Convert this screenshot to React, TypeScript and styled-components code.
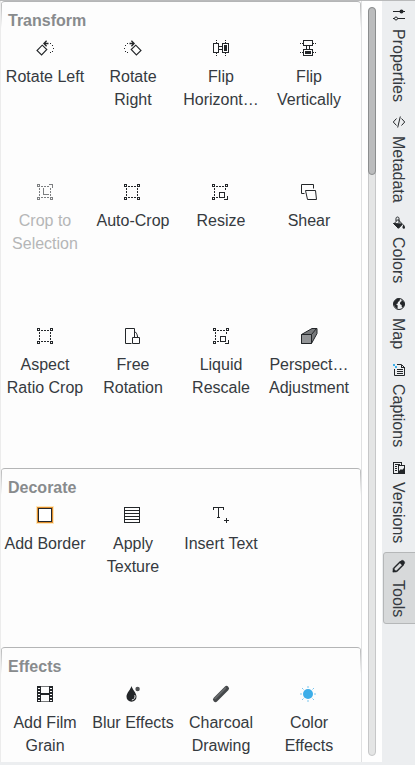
import React from "react";
import styled, { createGlobalStyle } from "styled-components";

const GlobalStyle = createGlobalStyle`
  * { box-sizing: border-box; }
  body { margin: 0; overflow: hidden; background: #eff0f1; }
`;

const Window = styled.div`
  display: flex;
  width: 415px;
  height: 765px;
  overflow: hidden;
  border-top: 1px solid #b9babb;
  background: #eceef0;
  color: #353a40;
  font: 16px/23px "Liberation Sans", Arial, sans-serif;
`;

const ToolArea = styled.main`
  flex: 0 0 362px;
  height: 761px;
  overflow: hidden;
  padding-left: 1px;
  background: #fdfdfd;
  border-right: 1px solid #e0e1e2;
  box-shadow: inset 1px 0 #ececec;
`;

const Group = styled.section<{ $height: number }>`
  height: ${(p) => p.$height}px;
  border-top: 1px solid #b4b5b6;
  border-radius: 4px 4px 0 0;
  background:
    linear-gradient(#b4b5b6, #fdfdfd00) left top / 1px 26px no-repeat,
    linear-gradient(#b4b5b6, #fdfdfd00) right top / 1px 26px no-repeat;
`;

const GroupTitle = styled.h2`
  margin: 0;
  padding: 7px 7px 0;
  height: 34px;
  font-size: 16px;
  line-height: 23px;
  font-weight: 700;
  color: #888b8d;
`;

const ToolGrid = styled.div`
  display: grid;
  grid-template-columns: repeat(4, 88px);
  grid-auto-rows: 144px;
`;

const Tool = styled.button<{ $muted?: boolean }>`
  display: flex;
  flex-direction: column;
  align-items: center;
  padding: 4px 0 0;
  border: 0;
  background: none;
  font: inherit;
  color: ${(p) => (p.$muted ? "#b5b6b7" : "inherit")};
`;

const ToolLabel = styled.span`
  margin-top: 9px;
  white-space: pre;
  text-align: center;
`;

const Glyph = styled.svg<{ $nudge?: boolean; $muted?: boolean }>`
  display: block;
  flex: none;
  width: 16px;
  height: 16px;
  overflow: visible;
  margin-right: ${(p) => (p.$nudge ? 2 : 0)}px;
  fill: none;
  stroke: ${(p) => (p.$muted ? "#7d7f81" : "#232629")};
  stroke-width: 1;
`;

const ScrollGutter = styled.div`
  flex: 0 0 20px;
  height: 761px;
  padding: 6px 6px 0;
  background: #fefefe;
`;

const ScrollTrack = styled.div`
  width: 8px;
  height: 749px;
  border: 1px solid #c6c7c8;
  border-radius: 4px;
  background: #e4e5e5;
`;

const ScrollThumb = styled.div`
  width: 8px;
  height: 168px;
  margin: -1px;
  border: 1px solid #8b8d8e;
  border-radius: 4px;
  background: #bbbcbd;
`;

const TabBar = styled.nav`
  display: flex;
  flex-direction: column;
  flex: 1;
  padding-left: 1px;
`;

const Tab = styled.button<{ $height: number; $active?: boolean }>`
  display: flex;
  flex-direction: column;
  align-items: flex-start;
  gap: 6px;
  width: 36px;
  height: ${(p) => p.$height}px;
  padding: 5px 0 0 7px;
  border: 1px solid ${(p) => (p.$active ? "#b5b7b8" : "transparent")};
  border-radius: 3px;
  background: ${(p) => (p.$active ? "#d7d9da" : "none")};
  color: inherit;
  font: inherit;
`;

const TabLabel = styled.span`
  writing-mode: vertical-rl;
  margin-left: -1px;
  line-height: 16px;
  white-space: nowrap;
`;

const Dot = ({ x, y }: { x: number; y: number }) => (
  <rect x={x} y={y} width="1" height="1" fill="#232629" stroke="none" />
);

const RotateLeftArt = () => (
  <>
    <path d="M5.2 5.2 9.8 9.5 4.6 14.9 0 10.5Z" strokeWidth="1.1" />
    <path d="M7 3.5h4.5M9.6.8 6.9 3.5l2.7 2.7" strokeWidth="1.3" />
    <Dot x={13} y={3} /><Dot x={15} y={5} /><Dot x={16} y={8} />
    <Dot x={15} y={11} /><Dot x={13} y={12} />
  </>
);

const Corners = ({ open }: { open?: "tr" | "br" }) => (
  <g shapeRendering="crispEdges">
    <path d="M.5.5h2v2h-2zM.5 13.5h2v2h-2z" />
    {open === "tr" ? <path d="M12 .5h3.5V4" /> : <path d="M13.5.5h2v2h-2z" />}
    {open === "br" ? <path d="M12 15.5h3.5V12" /> : <path d="M13.5 13.5h2v2h-2z" />}
    <path d="M4 2.5h9M2.5 4v9" strokeDasharray="2 1" />
    <path d={open === "br" ? "M4 13.5h2M13.5 4v3" : "M4 13.5h9M13.5 4v9"} strokeDasharray="2 1" />
  </g>
);

const ResizeArt = () => (
  <>
    <Corners open="br" />
    <path d="M7.5 8.5h5v5h-5z" shapeRendering="crispEdges" />
  </>
);

const FlipArt = () => (
  <g shapeRendering="crispEdges">
    <path d="M.5 3.5h5v9h-5zM9.5 3.5h6v9h-6z" />
    <path d="M6 6.5h4M6 9.5h4" />
    <rect x="11" y="5" width="3" height="6" fill="#232629" stroke="none" />
    <path d="M3.5 0v1m0 1v1m0 10v1m0 1v1M12.5 0v1m0 1v1m0 10v1m0 1v1" />
  </g>
);

const art: Record<string, React.ReactNode> = {
  rotateLeft: <RotateLeftArt />,
  rotateRight: <g transform="matrix(-1 0 0 1 17 0)"><RotateLeftArt /></g>,
  flipH: <FlipArt />,
  flipV: (
    <g shapeRendering="crispEdges">
      <path d="M3.5.5h9v5h-9zM3.5 9.5h9v6h-9zM6.5 6v4M9.5 6v4" />
      <rect x="5" y="11" width="6" height="3" fill="#232629" stroke="none" />
      <path d="M0 3.5h1m1 0h1m10 0h1m1 0h1M0 12.5h1m1 0h1m10 0h1m1 0h1" />
    </g>
  ),
  cropSelection: (
    <>
      <Corners open="tr" />
      <path d="M6.5 4v6.5H12" shapeRendering="crispEdges" />
    </>
  ),
  crop: <Corners />,
  resize: <ResizeArt />,
  shear: (
    <>
      <path d="M3.5 9.5h-3v-9h12v4" />
      <path d="M4.5 6.5h10l1 9h-9z" />
    </>
  ),
  freeRotation: (
    <>
      <path d="M7.5 15.5h-6V.5h9V3" />
      <path d="M8.5 9.5h7v6h-7zM10 3.2c2 .8 3.2 2.6 3.6 5.8M10.5 3v6" />
    </>
  ),
  perspective: (
    <>
      <path d="M.5 6.5 11 .5h5v5l-5.5 10H.5z" fill="#77797b" />
      <path d="M.5 6.5h10v9H.5z" fill="#929496" />
      <path d="m10.5 6.5 5-6" />
    </>
  ),
  border: (
    <g shapeRendering="crispEdges">
      <rect x="-.5" y="-.5" width="17" height="17" stroke="#fde6ba" />
      <rect x=".5" y=".5" width="15" height="15" stroke="#df8d2e" />
      <rect x="1.5" y="1.5" width="13" height="13" fill="#fff" />
    </g>
  ),
  texture: <path d="M.5.5h15v15H.5zM1 3.5h14M1 6.5h14M1 9.5h14M1 12.5h14" shapeRendering="crispEdges" />,
  text: <path d="M.5 3V.5h10V3M5.5 1v10M4 10.5h3M13.5 11v5M11 13.5h5" shapeRendering="crispEdges" />,
  film: (
    <g shapeRendering="crispEdges">
      <path d="M0 .5h16M0 15.5h16" stroke="#77797b" />
      <path d="M4 8h8" strokeWidth="2" />
      <path d="M.5 0v16M3.5 0v16M12.5 0v16M15.5 0v16" />
      <path d="M2 0v16M14 0v16" strokeWidth="2" strokeDasharray="2 1" />
    </g>
  ),
  blur: (
    <>
      <path d="M6.5 0C5.7 3.5 1.5 6.8 1.5 10.8a5 5 0 0 0 10 0C11.5 6.8 7.3 3.5 6.5 0Z" fill="#232629" stroke="none" />
      <path d="M9.8 9.2c.9 2.3-.6 4.5-3 4.8" stroke="#f5f5f5" />
      <circle cx="12.6" cy="3" r="2.2" fill="#505254" stroke="none" />
    </>
  ),
  charcoal: (
    <>
      <path d="M2.5 13.5 13.5 2.5" stroke="#45484a" strokeWidth="5" strokeLinecap="round" />
      <path d="M2.2 12.2 12.3 2.1" stroke="#66696b" strokeWidth="2" strokeLinecap="round" />
    </>
  ),
  sun: (
    <>
      <circle cx="8" cy="8" r="5" fill="#3daee9" stroke="none" />
      <path d="M8 0v2m0 12v2M0 8h2m12 0h2M2 2l1.5 1.5m9 9L14 14M2 14l1.5-1.5m9-9L14 2" stroke="#7cc7ee" />
    </>
  ),
  properties: (
    <>
      <path d="M2 4.5h12M2 11.5h1.5m3 0H14" />
      <circle cx="10.5" cy="4.5" r="2" fill="#232629" stroke="none" />
      <circle cx="5" cy="11.5" r="1.5" />
    </>
  ),
  metadata: <path d="M5.5 4.5 2.3 8l3.2 3.5m5-7L13.7 8l-3.2 3.5M9.3 2.5l-2.6 11" />,
  colors: (
    <>
      <path d="m7 4.5 4.5 4.7-4 4L3 8.7z" />
      <path d="m2.5 8.5 8.5.5-3.7 4.2Z" fill="#232629" />
      <path d="M5 6V3.5C5 1.5 8 1.5 8 3.5V8" />
      <path d="M12.6 9.3c-.7 1.6-1.4 2.3-1.1 3.4.4 1.4 2.3 1.2 2.5 0 .2-1-.7-2-1.4-3.4Z" fill="#232629" stroke="none" />
    </>
  ),
  map: (
    <>
      <circle cx="8" cy="8" r="5.5" />
      <path d="M3 5.5 6 2.5l3 .5-.5 2L7 6l-.5 1.7L5 8l1.7 1.5-.2 3.7L4 11 2.5 8zM10 3l3 3 .7 2.5-1.6 3-1.3-.4-.2-2-1.7-1L9.3 6l1.5-1z" fill="#232629" stroke="none" />
    </>
  ),
  captions: (
    <>
      <path d="M6 2.5h4.5l3 3v8h-10V7" />
      <path d="M10.5 2.5v3h3M5.5 7.5h6M5.5 9.5h6M5.5 11.5h6" shapeRendering="crispEdges" />
      <path d="M2 2h2v2H2zM4 4h2v2H4z" fill="#3daee9" stroke="none" />
    </>
  ),
  versions: (
    <>
      <path d="M7 13.5H2.5v-11h8V5M4 4.5h5M4 6.5h2M4 8.5h2M4 10.5h2" shapeRendering="crispEdges" />
      <path d="M7.5 5.5h6v8h-6z" shapeRendering="crispEdges" />
      <path d="M8 13v-2l2-2 1 1 2-2v5z" fill="#232629" stroke="none" />
    </>
  ),
  tools: (
    <>
      <path d="m3 10 6.3-6.2 3 3L6 13l-3.5.5z" strokeWidth="1.4" />
      <path d="m8.6 4.4 2.2-2.1c1.4-.4 3.3 1.4 2.9 2.9l-2.2 2.2zM2 14v-3.5L5.5 14z" fill="#232629" strokeWidth=".5" />
    </>
  ),
};

type ToolItem = { label: string; icon: string; nudge?: boolean; muted?: boolean };

const groups: { title: string; height: number; items: ToolItem[] }[] = [
  {
    title: "Transform",
    height: 467,
    items: [
      { label: "Rotate Left", icon: "rotateLeft" },
      { label: "Rotate\nRight", icon: "rotateRight", nudge: true },
      { label: "Flip\nHorizont…", icon: "flipH" },
      { label: "Flip\nVertically", icon: "flipV", nudge: true },
      { label: "Crop to\nSelection", icon: "cropSelection", muted: true },
      { label: "Auto-Crop", icon: "crop", nudge: true },
      { label: "Resize", icon: "resize", nudge: true },
      { label: "Shear", icon: "shear" },
      { label: "Aspect\nRatio Crop", icon: "crop" },
      { label: "Free\nRotation", icon: "freeRotation", nudge: true },
      { label: "Liquid\nRescale", icon: "resize" },
      { label: "Perspect…\nAdjustment", icon: "perspective" },
    ],
  },
  {
    title: "Decorate",
    height: 179,
    items: [
      { label: "Add Border", icon: "border" },
      { label: "Apply\nTexture", icon: "texture", nudge: true },
      { label: "Insert Text", icon: "text" },
    ],
  },
  {
    title: "Effects",
    height: 179,
    items: [
      { label: "Add Film\nGrain", icon: "film" },
      { label: "Blur Effects", icon: "blur" },
      { label: "Charcoal\nDrawing", icon: "charcoal" },
      { label: "Color\nEffects", icon: "sun", nudge: true },
    ],
  },
];

const tabs = [
  { label: "Properties", icon: "properties", height: 107 },
  { label: "Metadata", icon: "metadata", height: 101 },
  { label: "Colors", icon: "colors", height: 81 },
  { label: "Map", icon: "map", height: 66 },
  { label: "Captions", icon: "captions", height: 98 },
  { label: "Versions", icon: "versions", height: 98 },
  { label: "Tools", icon: "tools", height: 72 },
];

export default function App() {
  return (
    <>
      <GlobalStyle />
      <Window>
        <ToolArea>
          {groups.map((group) => (
            <Group key={group.title} $height={group.height}>
              <GroupTitle>{group.title}</GroupTitle>
              <ToolGrid>
                {group.items.map((item) => (
                  <Tool key={item.label} $muted={item.muted}>
                    <Glyph viewBox="0 0 16 16" $nudge={item.nudge} $muted={item.muted}>
                      {art[item.icon]}
                    </Glyph>
                    <ToolLabel>{item.label}</ToolLabel>
                  </Tool>
                ))}
              </ToolGrid>
            </Group>
          ))}
        </ToolArea>
        <ScrollGutter>
          <ScrollTrack>
            <ScrollThumb />
          </ScrollTrack>
        </ScrollGutter>
        <TabBar>
          {tabs.map((tab) => (
            <Tab key={tab.label} $height={tab.height} $active={tab.label === "Tools"}>
              <Glyph viewBox="0 0 16 16">{art[tab.icon]}</Glyph>
              <TabLabel>{tab.label}</TabLabel>
            </Tab>
          ))}
        </TabBar>
      </Window>
    </>
  );
}
